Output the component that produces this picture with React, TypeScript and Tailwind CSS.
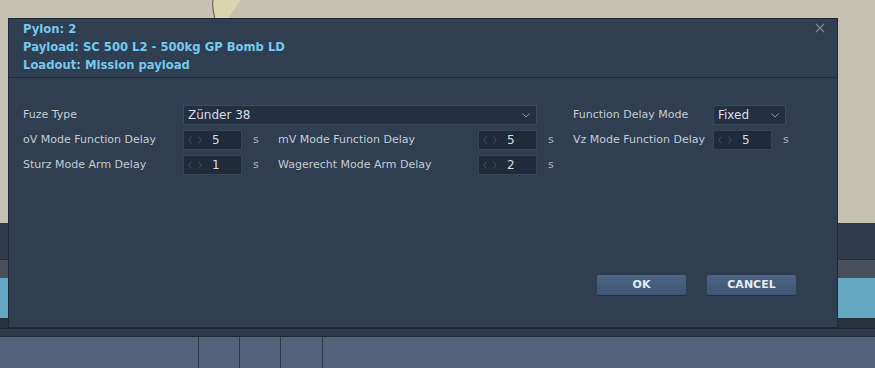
import React from 'react';

const font = { fontFamily: '"DejaVu Sans", Verdana, sans-serif' };

function Chevron() {
  return (
    <svg width="8" height="5" viewBox="0 0 8 5" className="shrink-0">
      <path d="M0.5 0.5 L4 4 L7.5 0.5" fill="none" stroke="#7f8c9a" strokeWidth="1" />
    </svg>
  );
}

function Select({ value, className }: { value: string; className: string }) {
  return (
    <div
      className={`h-5 flex items-center justify-between pl-[4px] pr-[6px] bg-[#223041] border border-[#3b4b5e] text-[12px] text-[#d6dde4] ${className}`}
    >
      <span>{value}</span>
      <Chevron />
    </div>
  );
}

function Spin({ value }: { value: string }) {
  return (
    <div className="w-[59px] h-5 flex items-center bg-[#1f2b3a] border border-[#35455a] text-[12px] text-[#d6dde4]">
      <svg width="14" height="8" viewBox="0 0 14 8" className="ml-[4px] shrink-0">
        <path d="M3.5 0.5 L0.8 4 L3.5 7.5 M10.5 0.5 L13.2 4 L10.5 7.5" fill="none" stroke="#3f5064" strokeWidth="1" />
      </svg>
      <span className="ml-[10px]">{value}</span>
    </div>
  );
}

function Label({ children, className = '' }: { children: React.ReactNode; className?: string }) {
  return <div className={`text-[11px] text-[#c3ccd5] whitespace-nowrap ${className}`}>{children}</div>;
}

function Unit() {
  return <div className="text-[11px] text-[#aab4bf] pl-[11px]">s</div>;
}

function Button({ children }: { children: React.ReactNode }) {
  return (
    <button className="w-[89px] h-5 rounded-[2px] bg-gradient-to-b from-[#4d6584] to-[#3e5472] text-[11px] font-bold text-[#e6ebf0] shadow-[0_1px_0_#24303d]">
      {children}
    </button>
  );
}

export default function App() {
  return (
    <div className="relative w-[875px] h-[368px] overflow-hidden bg-[#c5c2b2]" style={font}>
      {/* scene behind the dialog */}
      <div className="flex flex-col h-full">
        <div className="h-[223px] bg-[#c5c2b2] relative">
          <svg width="40" height="22" viewBox="0 0 40 22" className="absolute left-[205px] top-0">
            <path d="M8 0 L36 0 C31 6 27 12 23 19 L10 19 C8 12 7 6 8 0 Z" fill="#d9d5ad" />
            <path d="M8 0 C7 6 8 12 10 19" fill="none" stroke="#6f6a52" strokeWidth="1.2" />
          </svg>
        </div>
        <div className="h-[36px] bg-[#2e3c4e]" />
        <div className="h-[19px] bg-[#474f5b] border-t border-[#263240]" />
        <div className="h-[40px] bg-[#63a7c0]" />
        <div className="h-[10px] bg-[#27323f]" />
        <div className="h-[9px] bg-[#2d3b4c] border-t border-[#1b2632] border-b border-b-[#1e2935]" />
        <div className="flex-1 flex bg-[#52627a]">
          <div className="w-[199px] border-r border-[#2b3749]" />
          <div className="w-[41px] border-r border-[#2b3749]" />
          <div className="w-[41px] border-r border-[#2b3749]" />
          <div className="w-[42px] border-r border-[#2b3749]" />
        </div>
      </div>

      {/* dialog */}
      <div className="absolute left-[8px] top-[18px] w-[830px] h-[310px] bg-[#2f3e50] border border-[#1e2935] flex flex-col">
        <div className="relative pt-px pb-[3px] pl-[14px] border-b border-[#202c39] text-[11.6px] font-bold leading-[18px] text-[#74c9ec]">
          <div>Pylon: 2</div>
          <div>Payload: SC 500 L2 - 500kg GP Bomb LD</div>
          <div>Loadout: Mission payload</div>
          <svg width="10" height="10" viewBox="0 0 10 10" className="absolute right-[12px] top-[4px]">
            <path d="M1 1 L9 9 M9 1 L1 9" stroke="#7d8a98" strokeWidth="1.1" />
          </svg>
        </div>

        <div className="pt-[27px] pl-[14px]">
          <div className="grid grid-cols-[160px_59px_36px_200px_59px_36px_140px_auto] auto-rows-[20px] gap-y-[5px] items-center">
            <Label>Fuze Type</Label>
            <Select value="Zünder 38" className="col-span-4 w-[354px]" />
            <div />
            <Label>Function Delay Mode</Label>
            <Select value="Fixed" className="w-[73px]" />

            <Label>oV Mode Function Delay</Label>
            <Spin value="5" />
            <Unit />
            <Label>mV Mode Function Delay</Label>
            <Spin value="5" />
            <Unit />
            <Label>Vz Mode Function Delay</Label>
            <div className="flex items-center">
              <Spin value="5" />
              <Unit />
            </div>

            <Label>Sturz Mode Arm Delay</Label>
            <Spin value="1" />
            <Unit />
            <Label>Wagerecht Mode Arm Delay</Label>
            <Spin value="2" />
            <Unit />
          </div>
        </div>

        <div className="flex-1 flex items-end pb-[32px] pl-[588px] gap-[21px]">
          <Button>OK</Button>
          <Button>CANCEL</Button>
        </div>
      </div>
    </div>
  );
}
